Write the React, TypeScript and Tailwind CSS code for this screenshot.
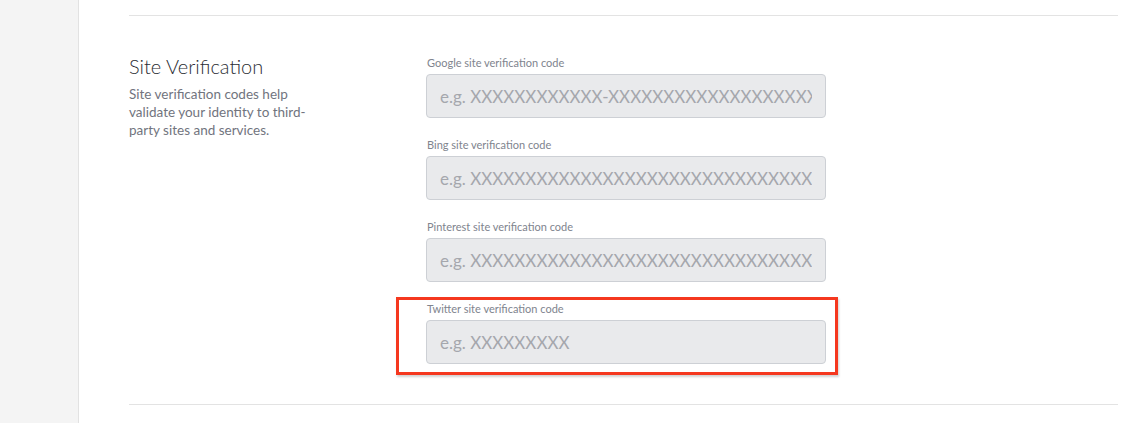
type Field = {
  label: string;
  placeholder: string;
  highlighted?: boolean;
};

const fields: Field[] = [
  { label: 'Google site verification code', placeholder: 'e.g. XXXXXXXXXXXX-XXXXXXXXXXXXXXXXXXXXXXXXXXX' },
  { label: 'Bing site verification code', placeholder: 'e.g. XXXXXXXXXXXXXXXXXXXXXXXXXXXXXXXXXXXXXXXX' },
  { label: 'Pinterest site verification code', placeholder: 'e.g. XXXXXXXXXXXXXXXXXXXXXXXXXXXXXXXXXXXXXXXX' },
  { label: 'Twitter site verification code', placeholder: 'e.g. XXXXXXXXX', highlighted: true },
];

function VerificationField({ label, placeholder, highlighted }: Field) {
  return (
    <div className="relative">
      {highlighted && (
        <div className="pointer-events-none absolute -left-[30px] -top-[5px] -right-[12px] -bottom-[11px] border-[3px] border-[#f5381f] shadow-[1px_2px_2px_rgba(0,0,0,0.18)]" />
      )}
      <label className="block text-[11px] leading-[14px] text-[#80848e] ml-px mb-[4px]">{label}</label>
      <input
        type="text"
        placeholder={placeholder}
        className="block w-[400px] h-[44px] rounded-[4px] border border-[#cdd0d5] bg-[#e9eaec] px-[13px] text-[17px] text-[#3a3d44] placeholder:text-[#a5a7ad] outline-none"
      />
    </div>
  );
}

export default function App() {
  return (
    <div className="flex h-[423px] w-[1121px] bg-white font-['Lato',sans-serif] overflow-hidden">
      <div className="w-[79px] shrink-0 bg-[#f4f4f4] border-r border-[#e2e2e2]" />
      <div className="flex-1 pl-[50px] pr-[3px] pt-[15px]">
        <div className="border-t border-[#e3e3e3]" />
        <div className="flex pt-[36px] pb-[40px] border-b border-[#e3e3e3]">
          <div className="w-[297px] shrink-0">
            <h2 className="text-[20px] leading-[28px] font-light text-[#2b2d34]">Site Verification</h2>
            <p className="mt-[5px] text-[13.5px] leading-[18px] text-[#71747e]">
              Site verification codes help
              <br />
              validate your identity to third-
              <br />
              party sites and services.
            </p>
          </div>
          <div className="flex flex-col gap-[20px] pt-[4px]">
            {fields.map(field => (
              <VerificationField key={field.label} {...field} />
            ))}
          </div>
        </div>
      </div>
    </div>
  );
}
